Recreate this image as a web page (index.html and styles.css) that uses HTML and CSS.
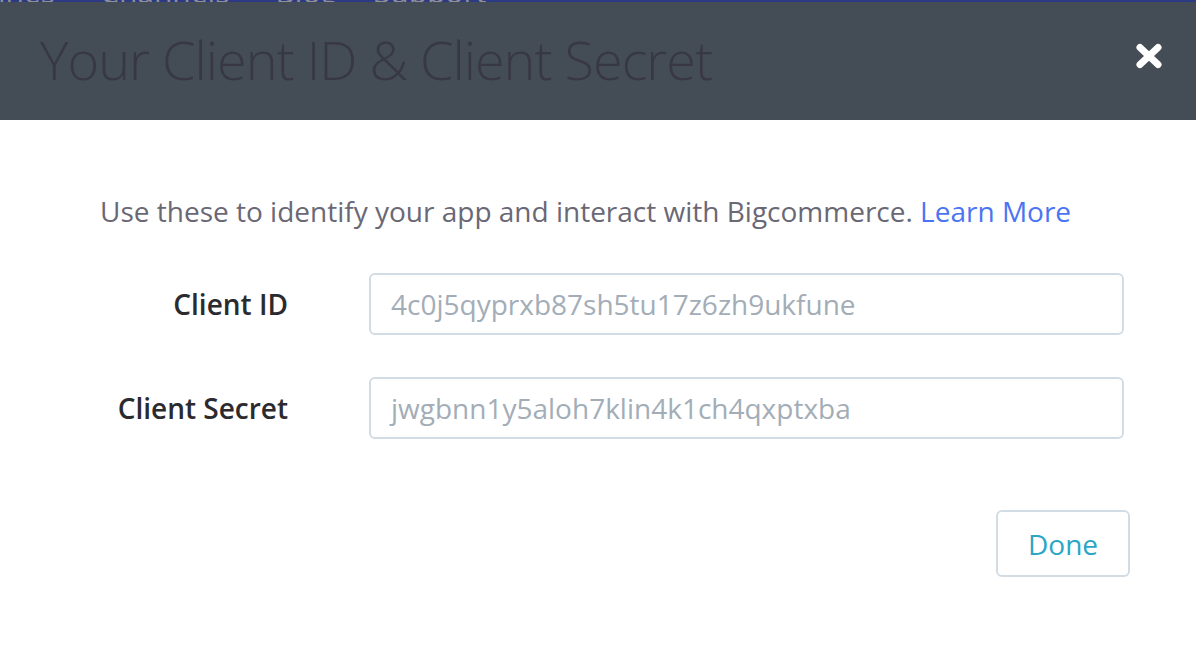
FILE: index.html
```html
<!DOCTYPE html>
<html lang="en">
<head>
<meta charset="utf-8">
<title>Your Client ID &amp; Client Secret</title>
<link rel="stylesheet" href="styles.css">
</head>
<body>
<div class="nav-strip">
  <div class="nav-items">
    <div class="nav-first"><span>Guidelines</span></div>
    <span class="nav-item nav-channels">Channels</span>
    <span class="nav-item nav-blog">Blog</span>
    <span class="nav-item">Support</span>
  </div>
</div>
<div class="modal">
  <header class="modal-header">
    <h1 class="modal-title">Your Client ID &amp; Client Secret</h1>
    <button class="close-btn" aria-label="Close">
      <svg width="28" height="26" viewBox="0 0 28 26">
        <path d="M5 4.5 L23 21.5 M23 4.5 L5 21.5" stroke="#ffffff" stroke-width="7" stroke-linecap="round"/>
      </svg>
    </button>
  </header>
  <div class="modal-body">
    <p class="intro">Use these to identify your app and interact with Bigcommerce. <a class="link" href="#">Learn More</a></p>
    <div class="form">
      <label class="label">Client ID</label>
      <div class="field">4c0j5qyprxb87sh5tu17z6zh9ukfune</div>
      <label class="label">Client Secret</label>
      <div class="field">jwgbnn1y5aloh7klin4k1ch4qxptxba</div>
    </div>
    <div class="actions">
      <button class="done-btn">Done</button>
    </div>
  </div>
</div>
</body>
</html>
```

FILE: styles.css
```css
* { box-sizing: border-box; }
html, body {
  margin: 0;
  padding: 0;
  background: #ffffff;
  font-family: "Open Sans", "Liberation Sans", sans-serif;
  overflow: hidden;
}
.nav-strip {
  height: 2px;
  overflow: hidden;
  background: #2c3a85;
}
.nav-items {
  display: flex;
  margin-top: -28px;
  font-size: 30px;
  line-height: 40px;
  color: #8e8f96;
  white-space: nowrap;
}
.nav-first {
  width: 55px;
  display: flex;
  justify-content: flex-end;
  margin-right: 45px;
}
.nav-channels { margin-right: 46px; }
.nav-blog { margin-right: 37px; }
.modal-header {
  height: 118px;
  background: #444d56;
  display: flex;
  align-items: center;
  justify-content: space-between;
  padding: 0 33px 4px 40px;
}
.modal-title {
  margin: 0;
  font-size: 54px;
  font-weight: 300;
  color: #383845;
  line-height: 76px;
  letter-spacing: -1px;
}
.close-btn {
  border: 0;
  background: transparent;
  padding: 0;
  margin-top: -6px;
  display: flex;
}
.modal-body {
  padding: 71px 66px 0 100px;
}
.intro {
  margin: 0;
  font-size: 28px;
  line-height: 40px;
  color: #6a6875;
}
.link {
  color: #4b74f2;
  text-decoration: none;
}
.form {
  margin-top: 42px;
  margin-left: 1px;
  display: grid;
  grid-template-columns: 187px 755px;
  column-gap: 81px;
  row-gap: 42px;
}
.label {
  align-self: center;
  text-align: right;
  font-size: 28px;
  font-weight: 600;
  color: #2b2a2e;
  line-height: 40px;
}
.field {
  height: 62px;
  border: 2px solid #d2dce4;
  border-radius: 6px;
  padding: 0 20px;
  display: flex;
  align-items: center;
  font-size: 28px;
  color: #a3adb7;
}
.actions {
  margin-top: 71px;
  display: flex;
  justify-content: flex-end;
}
.done-btn {
  width: 134px;
  height: 67px;
  border: 2px solid #d2dce4;
  border-radius: 6px;
  background: #ffffff;
  font-family: "Open Sans", "Liberation Sans", sans-serif;
  font-size: 28px;
  color: #2aa6c6;
  padding: 0;
}
```
